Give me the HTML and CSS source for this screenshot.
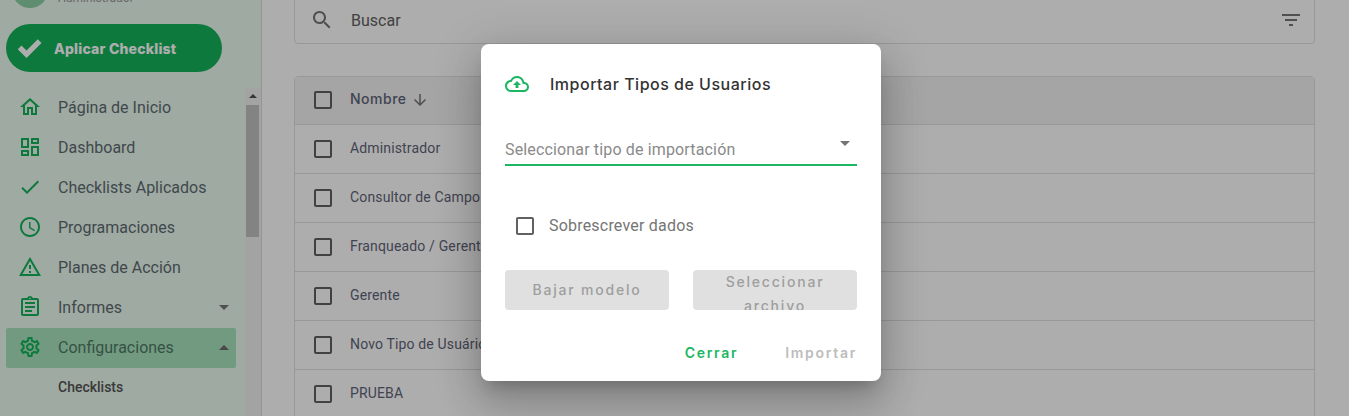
FILE: index.html
```html
<!DOCTYPE html>
<html>
<head>
<meta charset="utf-8">
<title>Importar Tipos de Usuarios</title>
<link rel="stylesheet" href="styles.css">
</head>
<body>
<svg class="defs">
  <symbol id="home" viewBox="0 0 24 24"><path d="M12 5.69l5 4.5V18h-2v-6H9v6H7v-7.81l5-4.5M12 3L2 12h3v8h6v-6h2v6h6v-8h3L12 3z"/></symbol>
  <symbol id="dash" viewBox="0 0 24 24"><path d="M19 5v2h-4V5h4M9 5v6H5V5h4m10 8v6h-4v-6h4M9 17v2H5v-2h4M21 3h-8v6h8V3zM11 3H3v10h8V3zm10 8h-8v10h8V11zm-10 4H3v6h8v-6z"/></symbol>
  <symbol id="check" viewBox="0 0 24 24"><path d="M9 16.17L4.83 12l-1.42 1.41L9 19 21 7l-1.41-1.41z"/></symbol>
  <symbol id="clock" viewBox="0 0 24 24"><path d="M11.99 2C6.47 2 2 6.48 2 12s4.47 10 9.99 10C17.52 22 22 17.52 22 12S17.52 2 11.99 2zM12 20c-4.42 0-8-3.58-8-8s3.58-8 8-8 8 3.58 8 8-3.58 8-8 8zm.5-13H11v6l5.25 3.15.75-1.23-4.5-2.67z"/></symbol>
  <symbol id="warn" viewBox="0 0 24 24"><path d="M12 5.99L19.53 19H4.47L12 5.99M12 2L1 21h22L12 2zm1 14h-2v2h2v-2zm0-6h-2v4h2v-4z"/></symbol>
  <symbol id="report" viewBox="0 0 24 24"><path d="M19 3h-4.18C14.4 1.84 13.3 1 12 1s-2.4.84-2.82 2H5c-1.1 0-2 .9-2 2v14c0 1.1.9 2 2 2h14c1.1 0 2-.9 2-2V5c0-1.1-.9-2-2-2zm-7-.25c.41 0 .75.34.75.75s-.34.75-.75.75-.75-.34-.75-.75.34-.75.75-.75zM19 19H5V5h14v14zM7 15h7v2H7zm0-4h10v2H7zm0-4h10v2H7z"/></symbol>
  <symbol id="gear" viewBox="0 0 24 24"><path d="M19.43 12.98c.04-.32.07-.64.07-.98 0-.34-.03-.66-.07-.98l2.11-1.65c.19-.15.24-.42.12-.64l-2-3.46c-.09-.16-.26-.25-.44-.25-.06 0-.12.01-.17.03l-2.49 1c-.52-.4-1.08-.73-1.69-.98l-.38-2.65C14.46 2.18 14.25 2 14 2h-4c-.25 0-.46.18-.49.42l-.38 2.65c-.61.25-1.17.59-1.69.98l-2.49-1c-.06-.02-.12-.03-.18-.03-.17 0-.34.09-.43.25l-2 3.46c-.13.22-.07.49.12.64l2.11 1.65c-.04.32-.07.65-.07.98 0 .33.03.66.07.98l-2.11 1.65c-.19.15-.24.42-.12.64l2 3.46c.09.16.26.25.44.25.06 0 .12-.01.17-.03l2.49-1c.52.4 1.08.73 1.69.98l.38 2.65c.03.24.24.42.49.42h4c.25 0 .46-.18.49-.42l.38-2.65c.61-.25 1.17-.59 1.69-.98l2.49 1c.06.02.12.03.18.03.17 0 .34-.09.43-.25l2-3.46c.12-.22.07-.49-.12-.64l-2.11-1.65zm-1.98-1.71c.04.31.05.52.05.73 0 .21-.02.43-.05.73l-.14 1.13.89.7 1.08.84-.7 1.21-1.27-.51-1.04-.42-.9.68c-.43.32-.84.56-1.25.73l-1.06.43-.16 1.13-.2 1.35h-1.4l-.19-1.35-.16-1.13-1.06-.43c-.43-.18-.83-.41-1.23-.71l-.91-.7-1.06.43-1.27.51-.7-1.21 1.08-.84.89-.7-.14-1.13c-.03-.31-.05-.54-.05-.74s.02-.43.05-.73l.14-1.13-.89-.7-1.08-.84.7-1.21 1.27.51 1.04.42.9-.68c.43-.32.84-.56 1.25-.73l1.06-.43.16-1.13.2-1.35h1.39l.19 1.35.16 1.13 1.06.43c.43.18.83.41 1.23.71l.91.7 1.06-.43 1.27-.51.7 1.21-1.07.85-.89.7.14 1.13zM12 8c-2.21 0-4 1.79-4 4s1.79 4 4 4 4-1.79 4-4-1.79-4-4-4zm0 6c-1.1 0-2-.9-2-2s.9-2 2-2 2 .9 2 2-.9 2-2 2z"/></symbol>
  <symbol id="cloud" viewBox="0 0 24 24"><path d="M19.35 10.04C18.67 6.59 15.64 4 12 4 9.11 4 6.6 5.64 5.35 8.04 2.34 8.36 0 10.91 0 14c0 3.31 2.69 6 6 6h13c2.76 0 5-2.24 5-5 0-2.64-2.05-4.78-4.65-4.96zM19 18H6c-2.21 0-4-1.79-4-4 0-2.05 1.53-3.76 3.56-3.97l1.07-.11.5-.95C8.08 7.14 9.94 6 12 6c2.62 0 4.88 1.86 5.39 4.43l.3 1.5 1.53.11c1.56.1 2.78 1.41 2.78 2.96 0 1.65-1.35 3-3 3zM8 13h2.55v3h2.9v-3H16l-4-4z"/></symbol>
  <symbol id="search" viewBox="0 0 24 24"><path d="M15.5 14h-.79l-.28-.27C15.41 12.59 16 11.11 16 9.5 16 5.91 13.09 3 9.5 3S3 5.91 3 9.5 5.91 16 9.5 16c1.61 0 3.09-.59 4.23-1.57l.27.28v.79l5 4.99L20.49 19l-4.99-5zm-6 0C7.01 14 5 11.99 5 9.5S7.01 5 9.5 5 14 7.01 14 9.5 11.99 14 9.5 14z"/></symbol>
  <symbol id="filter" viewBox="0 0 24 24"><path d="M10 18h4v-2h-4v2zM3 6v2h18V6H3zm3 7h12v-2H6v2z"/></symbol>
  <symbol id="down" viewBox="0 0 24 24"><path d="M20 12l-1.41-1.41L13 16.17V4h-2v12.17l-5.58-5.6L4 12l8 8 8-8z"/></symbol>
  <symbol id="box" viewBox="0 0 24 24"><path d="M19 5v14H5V5h14m0-2H5c-1.1 0-2 .9-2 2v14c0 1.1.9 2 2 2h14c1.1 0 2-.9 2-2V5c0-1.1-.9-2-2-2z"/></symbol>
</svg>

<div class="app">
  <aside class="sidebar">
    <div class="profile">
      <div class="avatar"></div>
      <div class="role">Administrador</div>
    </div>
    <button class="apply-btn">
      <svg class="apply-check" viewBox="0 0 24 24"><path d="M3 13l3-3 4 4 9-9 3 3-12 12z"/></svg>
      Aplicar Checklist
    </button>
    <div class="nav-wrap">
      <nav class="nav">
        <a class="nav-item"><svg class="nav-icon"><use href="#home"/></svg>Página de Inicio</a>
        <a class="nav-item"><svg class="nav-icon"><use href="#dash"/></svg>Dashboard</a>
        <a class="nav-item"><svg class="nav-icon"><use href="#check"/></svg>Checklists Aplicados</a>
        <a class="nav-item"><svg class="nav-icon"><use href="#clock"/></svg>Programaciones</a>
        <a class="nav-item"><svg class="nav-icon"><use href="#warn"/></svg>Planes de Acción</a>
        <a class="nav-item"><svg class="nav-icon"><use href="#report"/></svg>Informes<span class="caret"></span></a>
        <a class="nav-item active"><svg class="nav-icon"><use href="#gear"/></svg>Configuraciones<span class="caret up"></span></a>
        <a class="nav-sub">Checklists</a>
      </nav>
      <div class="scrollbar">
        <div class="scroll-up"></div>
        <div class="scroll-thumb"></div>
      </div>
    </div>
  </aside>

  <main class="main">
    <div class="search-card">
      <svg class="search-icon"><use href="#search"/></svg>
      <span class="search-text">Buscar</span>
      <svg class="filter-icon"><use href="#filter"/></svg>
    </div>
    <div class="table">
      <div class="row head"><svg class="row-box"><use href="#box"/></svg><span class="row-text">Nombre</span><svg class="sort"><use href="#down"/></svg></div>
      <div class="row"><svg class="row-box"><use href="#box"/></svg><span class="row-text">Administrador</span></div>
      <div class="row"><svg class="row-box"><use href="#box"/></svg><span class="row-text">Consultor de Campo</span></div>
      <div class="row"><svg class="row-box"><use href="#box"/></svg><span class="row-text">Franqueado / Gerente</span></div>
      <div class="row"><svg class="row-box"><use href="#box"/></svg><span class="row-text">Gerente</span></div>
      <div class="row"><svg class="row-box"><use href="#box"/></svg><span class="row-text">Novo Tipo de Usuário</span></div>
      <div class="row"><svg class="row-box"><use href="#box"/></svg><span class="row-text">PRUEBA</span></div>
    </div>
  </main>
</div>

<div class="overlay">
  <div class="dialog">
    <div class="dialog-title">
      <svg class="cloud"><use href="#cloud"/></svg>
      <h2>Importar Tipos de Usuarios</h2>
    </div>
    <div class="select">
      <span>Seleccionar tipo de importación</span>
      <span class="caret select-caret"></span>
    </div>
    <label class="overwrite">
      <svg class="overwrite-box"><use href="#box"/></svg>
      <span class="overwrite-text">Sobrescrever dados</span>
    </label>
    <div class="file-btns">
      <button class="file-btn">Bajar modelo</button>
      <button class="file-btn">Seleccionar archivo</button>
    </div>
    <div class="actions">
      <button class="action close">Cerrar</button>
      <button class="action off">Importar</button>
    </div>
  </div>
</div>
</body>
</html>
```

FILE: styles.css
```css
* {
  box-sizing: border-box;
}
html, body {
  margin: 0;
  height: 416px;
  overflow: hidden;
}
body {
  font-family: Roboto, "Liberation Sans", sans-serif;
  background-color: #fff;
  color: #424242;
}
button {
  border: none;
  font-family: inherit;
}
.defs {
  display: none;
}
.app {
  display: flex;
  height: 416px;
}

/* sidebar */
.sidebar {
  width: 262px;
  flex-shrink: 0;
  background-color: #ebfbf0;
  border-right: 1px solid #dcdcdc;
  overflow: hidden;
}
.profile {
  height: 24px;
  position: relative;
  overflow: hidden;
}
.avatar {
  position: absolute;
  left: 12px;
  top: -28px;
  width: 36px;
  height: 36px;
  border-radius: 50%;
  background-color: #8cd0a5;
}
.role {
  position: absolute;
  left: 58px;
  top: -9px;
  font-size: 12px;
  line-height: 14px;
  color: #9a9a9a;
}
.apply-btn {
  display: flex;
  align-items: center;
  width: 216px;
  height: 48px;
  margin-left: 6px;
  padding: 0 0 0 8px;
  border-radius: 24px;
  background-color: #14b35b;
  color: #fff;
  font-family: Inter, sans-serif;
  font-weight: 800;
  font-size: 14px;
  letter-spacing: 0.2px;
}
.apply-check {
  width: 30px;
  height: 30px;
  margin-right: 10px;
  fill: #fff;
}
.nav-wrap {
  display: flex;
  margin-top: 16px;
}
.nav {
  width: 245px;
  padding-left: 6px;
}
.nav-item {
  display: flex;
  align-items: center;
  width: 230px;
  height: 40px;
  padding-left: 12px;
  padding-bottom: 2px;
  border-radius: 2px;
  font-size: 16px;
  color: #5f6b72;
}
.nav-item.active {
  background-color: #a9e4bf;
  color: #4f7a63;
}
.nav-icon {
  width: 24px;
  height: 24px;
  margin-right: 16px;
  fill: #14b35b;
}
.nav-sub {
  display: block;
  padding-left: 52px;
  height: 40px;
  line-height: 38px;
  font-size: 14px;
  font-weight: 500;
  color: #555;
}
.caret {
  width: 0;
  height: 0;
  margin-left: auto;
  margin-right: 7px;
  border-left: 5px solid transparent;
  border-right: 5px solid transparent;
  border-top: 5px solid #757575;
}
.caret.up {
  border-top: none;
  border-bottom: 5px solid #6b6b6b;
}
.scrollbar {
  width: 16px;
  height: 330px;
  background-color: #f1f1f1;
}
.scroll-up {
  height: 17px;
  position: relative;
}
.scroll-up::after {
  content: "";
  position: absolute;
  left: 4px;
  top: 6px;
  border-left: 4px solid transparent;
  border-right: 4px solid transparent;
  border-bottom: 4px solid #505050;
}
.scroll-thumb {
  width: 13px;
  height: 132px;
  margin-left: 1px;
  background-color: #c1c1c1;
}

/* main */
.main {
  flex: 1;
  padding: 0 34px 0 32px;
}
.search-card {
  display: flex;
  align-items: center;
  height: 48px;
  margin-top: -4px;
  padding: 0 11px 0 15px;
  border: 1px solid #e0e0e0;
  border-radius: 4px;
}
.search-icon {
  width: 24px;
  height: 24px;
  margin-right: 17px;
  fill: #757575;
}
.search-text {
  flex: 1;
  font-size: 16px;
  color: #616161;
}
.filter-icon {
  width: 24px;
  height: 24px;
  fill: #757575;
}
.table {
  margin-top: 32px;
  border: 1px solid #e0e0e0;
  border-radius: 4px 4px 0 0;
}
.row {
  display: flex;
  align-items: center;
  height: 49px;
  padding-left: 16px;
  border-bottom: 1px solid #e0e0e0;
  font-size: 14px;
  letter-spacing: 0.15px;
  color: #5f6478;
}
.row.head {
  height: 48px;
  padding-bottom: 2px;
  background-color: #f3f3f3;
  font-family: Inter, sans-serif;
  font-weight: 500;
  letter-spacing: 0.5px;
}
.row-box {
  width: 24px;
  height: 24px;
  margin-right: 15px;
  fill: #616161;
}
.row-text {
  margin-bottom: 2px;
}
.sort {
  width: 18px;
  height: 18px;
  margin-left: 4px;
  fill: #757575;
}

/* dialog */
.overlay {
  position: absolute;
  left: 0;
  top: 0;
  width: 1349px;
  height: 416px;
  padding: 44px 0 0 481px;
  background-color: rgba(0, 0, 0, 0.32);
}
.dialog {
  width: 400px;
  height: 337px;
  padding: 24px;
  border-radius: 8px;
  background-color: #fff;
  box-shadow: 0 11px 15px -7px rgba(0, 0, 0, 0.2), 0 24px 38px 3px rgba(0, 0, 0, 0.14), 0 9px 46px 8px rgba(0, 0, 0, 0.12);
}
.dialog-title {
  display: flex;
  align-items: center;
  height: 32px;
}
.cloud {
  width: 24px;
  height: 24px;
  margin-right: 21px;
  fill: #1db763;
}
.dialog-title h2 {
  margin: 0;
  font-family: Inter, sans-serif;
  font-weight: 500;
  font-size: 16px;
  letter-spacing: 0.5px;
  color: #333;
}
.select {
  display: flex;
  height: 35px;
  margin-top: 31px;
  padding-top: 10px;
  border-bottom: 2px solid #1db763;
  font-size: 16px;
  letter-spacing: 0.15px;
  line-height: 18px;
  color: #8a8a8a;
}
.select-caret {
  margin-top: 0;
  margin-right: 7px;
  height: 0;
}
.overwrite {
  display: flex;
  align-items: center;
  height: 24px;
  margin-top: 48px;
  padding-left: 8px;
  font-size: 16px;
  letter-spacing: 0.2px;
  color: #757575;
}
.overwrite-box {
  width: 24px;
  height: 24px;
  margin-right: 12px;
  fill: #616161;
}
.overwrite-text {
  margin-bottom: 2px;
}
.file-btns {
  display: flex;
  gap: 24px;
  margin-top: 32px;
}
.file-btn {
  width: 164px;
  height: 40px;
  padding: 0 16px;
  overflow: hidden;
  border-radius: 4px;
  background-color: #e0e0e0;
  color: #9e9e9e;
  font-family: Inter, sans-serif;
  font-weight: 500;
  font-size: 14px;
  line-height: 24px;
  letter-spacing: 1.8px;
}
.actions {
  display: flex;
  justify-content: flex-end;
  gap: 47px;
  margin-top: 33px;
}
.action {
  padding: 0;
  background: none;
  font-family: Inter, sans-serif;
  font-weight: 600;
  font-size: 14px;
  line-height: 20px;
  letter-spacing: 1.7px;
}
.action.close {
  color: #1db763;
}
.action.off {
  color: #bdbdbd;
}
```
